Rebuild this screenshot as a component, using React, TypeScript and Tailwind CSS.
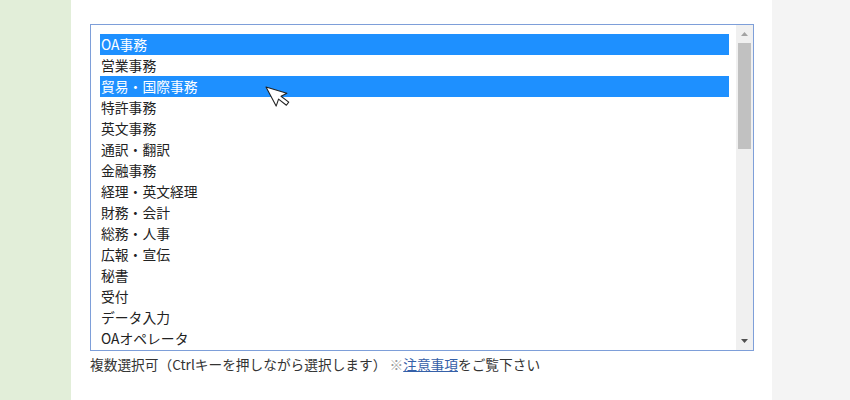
import React from "react";

const items = [
  "OA事務",
  "営業事務",
  "貿易・国際事務",
  "特許事務",
  "英文事務",
  "通訳・翻訳",
  "金融事務",
  "経理・英文経理",
  "財務・会計",
  "総務・人事",
  "広報・宣伝",
  "秘書",
  "受付",
  "データ入力",
  "OAオペレータ",
];
const selected = [0, 2];

export default function App() {
  return (
    <div
      className="flex w-[850px] h-[400px] bg-white overflow-hidden"
      style={{ fontFamily: '"Noto Sans CJK JP", "Noto Sans", sans-serif' }}
    >
      <div className="w-[71px] shrink-0 bg-[#e2eed9]" />
      <div className="flex-1 pl-[19px] pt-[24px] relative">
        <div className="w-[664px] h-[327px] border border-[#7e9fd9] flex bg-white">
          <div className="flex-1 pl-[9px] pr-[7px] pt-[9px] flex flex-col">
            {items.map((t, i) => (
              <div
                key={t}
                className={
                  "h-[21px] leading-[21px] text-[13.8px] pl-[1px] whitespace-nowrap " +
                  (selected.includes(i) ? "bg-[#1e90ff] text-white" : "text-[#222]")
                }
              >
                {t}
              </div>
            ))}
          </div>
          <div className="w-[17px] bg-[#f0f0f0] flex flex-col items-center">
            <div className="h-[18px] flex items-center justify-center">
              <svg width="7" height="4" viewBox="0 0 7 4">
                <path d="M0 4 L3.5 0 L7 4 Z" fill="#a3a3a3" />
              </svg>
            </div>
            <div className="w-[13px] h-[106px] bg-[#c1c1c1]" />
            <div className="flex-1" />
            <div className="h-[18px] flex items-center justify-center">
              <svg width="7" height="4" viewBox="0 0 7 4">
                <path d="M0 0 L3.5 4 L7 0 Z" fill="#505050" />
              </svg>
            </div>
          </div>
        </div>
        <div className="mt-[3px] text-[13.7px] text-[#333] leading-[20px] whitespace-nowrap">
          複数選択可（Ctrlキーを押しながら選択します）{" "}
          <span className="text-[#999]">※</span>
          <span className="text-[#3560a8] underline">注意事項</span>
          をご覧下さい
        </div>
        <svg
          className="absolute left-[193px] top-[84px]"
          width="30"
          height="30"
          viewBox="0 0 30 30"
        >
          <g transform="translate(2 3) rotate(-28) scale(1.35)">
            <path
              d="M0 0 L0 16 L4 12.3 L7 19 L9.6 17.8 L6.6 11.3 L11.5 11.3 Z"
              fill="#ffffff"
              stroke="#222"
              strokeWidth="0.8"
              strokeLinejoin="round"
            />
          </g>
        </svg>
      </div>
      <div className="w-[78px] shrink-0 bg-[#f4f4f4]" />
    </div>
  );
}
